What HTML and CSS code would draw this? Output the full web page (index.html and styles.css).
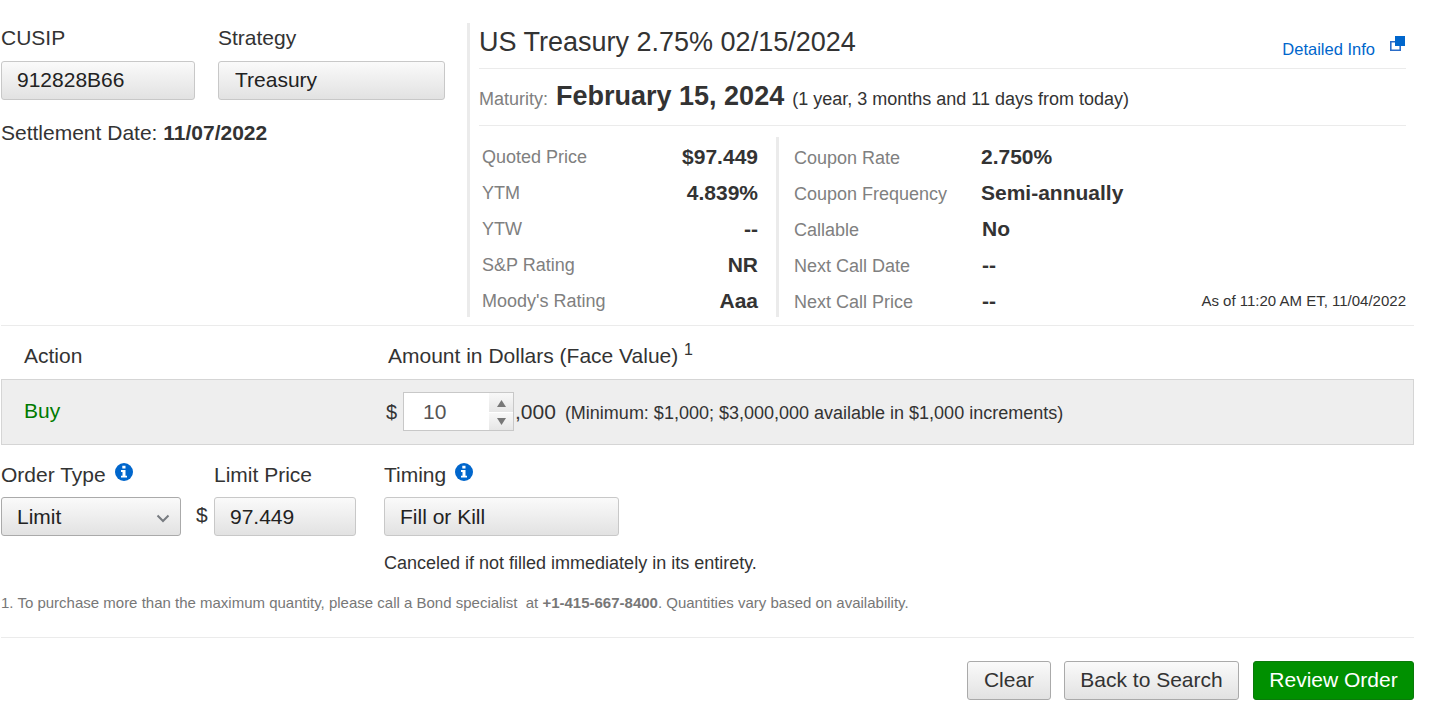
FILE: index.html
```
<!DOCTYPE html>
<html lang="en">
<head>
<meta charset="UTF-8">
<meta name="viewport" content="width=device-width, initial-scale=1.0">
<title>Bond Order</title>
<link rel="stylesheet" href="styles.css">
</head>
<body>

<form class="ticket">
  <!-- Security lookup and quote -->
  <section class="security">
    <div class="lookup">
      <div class="lookup-fields">
        <div class="field">
          <label for="cusip">CUSIP</label>
          <input type="text" id="cusip" class="box cusip" value="912828B66" readonly>
        </div>
        <div class="field">
          <label for="strategy">Strategy</label>
          <input type="text" id="strategy" class="box strategy" value="Treasury" readonly>
        </div>
      </div>
      <div class="settlement">Settlement Date: <b>11/07/2022</b></div>
    </div>

    <div class="details">
      <div class="title-row">
        <h1>US Treasury 2.75% 02/15/2024</h1>
        <a href="#" class="info-link">Detailed Info
          <svg class="popup-icon" width="16" height="16" viewBox="0 0 16 16">
            <path d="M.8 5.800h9.400v8.400H.8z" fill="#fff" stroke="#2a6cc8" stroke-width="1.600"/>
            <rect x="5" y="0" width="10" height="10" fill="#06c"/>
          </svg>
        </a>
      </div>
      <div class="maturity">
        <span class="muted">Maturity:</span>
        <b>February 15, 2024</b>
        <span>(1 year, 3 months and 11 days from today)</span>
      </div>
      <div class="stats">
        <dl class="quote">
          <dt>Quoted Price</dt><dd>$97.449</dd>
          <dt>YTM</dt><dd>4.839%</dd>
          <dt>YTW</dt><dd>--</dd>
          <dt>S&amp;P Rating</dt><dd>NR</dd>
          <dt>Moody's Rating</dt><dd>Aaa</dd>
        </dl>
        <dl class="coupon">
          <dt>Coupon Rate</dt><dd>2.750%</dd>
          <dt>Coupon Frequency</dt><dd>Semi-annually</dd>
          <dt>Callable</dt><dd class="indent">No</dd>
          <dt>Next Call Date</dt><dd class="indent">--</dd>
          <dt>Next Call Price</dt><dd class="indent">--</dd>
        </dl>
        <div class="as-of">As of 11:20 AM ET, 11/04/2022</div>
      </div>
    </div>
  </section>

  <!-- Action and amount -->
  <div class="amount-head">
    <span class="col-action">Action</span>
    <span>Amount in Dollars (Face Value) <sup>1</sup></span>
  </div>
  <div class="amount-row">
    <span class="col-action buy">Buy</span>
    <span class="dollar">$</span>
    <div class="spinner">
      <input type="text" value="10">
      <div class="spin-buttons">
        <button type="button" aria-label="Increase"><svg width="9" height="7" viewBox="0 0 9 7"><path d="M4.5 0 9 7H0z" fill="#777"/></svg></button>
        <button type="button" aria-label="Decrease"><svg width="9" height="7" viewBox="0 0 9 7"><path d="M0 0h9L4.5 7z" fill="#777"/></svg></button>
      </div>
    </div>
    <span class="thousands">,000</span>
    <span class="minimum">(Minimum: $1,000; $3,000,000 available in $1,000 increments)</span>
  </div>

  <!-- Order options -->
  <div class="options">
    <div class="field order-type">
      <label>Order Type
        <svg class="info-icon" width="18" height="18" viewBox="0 0 18 18">
          <circle cx="9" cy="9" r="9" fill="#06c"/>
          <path d="M7.300 2.800h3.200v2.800H7.300zM6 7h4.500v5.700H12v1.900H6v-1.900h1.500V8.900H6z" fill="#fff"/>
        </svg>
      </label>
      <div class="box select">
        <span>Limit</span>
        <svg class="chevron" width="14" height="9" viewBox="0 0 14 9"><path d="M1.500 1.500 7 7l5.500-5.500" fill="none" stroke="#777b80" stroke-width="2"/></svg>
      </div>
    </div>
    <span class="price-dollar">$</span>
    <div class="field limit-price">
      <label for="price">Limit Price</label>
      <input type="text" id="price" class="box price" value="97.449">
    </div>
    <div class="field">
      <label>Timing
        <svg class="info-icon" width="18" height="18" viewBox="0 0 18 18">
          <circle cx="9" cy="9" r="9" fill="#06c"/>
          <path d="M7.300 2.800h3.200v2.800H7.300zM6 7h4.500v5.700H12v1.900H6v-1.900h1.500V8.900H6z" fill="#fff"/>
        </svg>
      </label>
      <input type="text" class="box timing" value="Fill or Kill" readonly>
      <p class="timing-note">Canceled if not filled immediately in its entirety.</p>
    </div>
  </div>

  <p class="footnote">1. To purchase more than the maximum quantity, please call a Bond specialist&nbsp; at <b>+1-415-667-8400</b>. Quantities vary based on availability.</p>

  <div class="actions">
    <button type="button" class="button clear">Clear</button>
    <button type="button" class="button back">Back to Search</button>
    <button type="button" class="button review">Review Order</button>
  </div>
</form>

</body>
</html>
```
FILE: styles.css
```
* {
  box-sizing: border-box;
}
body {
  margin: 0;
  background: #fff;
  color: #333;
  font-family: Arial, "Liberation Sans", sans-serif;
  font-size: 21px;
  line-height: 24px;
}
h1, dl, dt, dd, p {
  margin: 0;
}
input, button {
  font: inherit;
  color: inherit;
}
.ticket {
  width: 1414px;
  padding: 23px 0 0 1px;
}
.field {
  display: flex;
  flex-direction: column;
}
.field label {
  height: 38px;
  padding-top: 3px;
  white-space: nowrap;
}
.box {
  height: 39px;
  padding: 0 15px;
  border: 1px solid #c8c8c8;
  border-radius: 3px;
  background: linear-gradient(#fafafa, #e2e2e2);
  color: #222;
}

/* Security */
.security {
  display: flex;
  height: 303px;
  border-bottom: 1px solid #ebebeb;
}
.lookup {
  width: 466px;
}
.lookup-fields {
  display: flex;
  gap: 23px;
}
.lookup .box {
  padding-bottom: 2px;
}
.cusip {
  width: 194px;
}
.strategy {
  width: 227px;
  padding-left: 16px;
}
.settlement {
  margin-top: 21px;
}
.details {
  flex: 1;
  height: 294px;
  margin-right: 8px;
  padding-left: 9px;
  border-left: 3px solid #ebebeb;
}
.title-row {
  display: flex;
  justify-content: space-between;
  height: 46px;
  border-bottom: 1px solid #ebebeb;
}
h1 {
  font-size: 27px;
  font-weight: normal;
  line-height: 38px;
}
.info-link {
  display: flex;
  gap: 15px;
  padding-top: 14px;
  color: #06c;
  font-size: 16.5px;
  text-decoration: none;
}
.popup-icon {
  margin-top: -1px;
}
.maturity {
  display: flex;
  align-items: baseline;
  gap: 8px;
  height: 57px;
  padding-top: 11px;
  border-bottom: 1px solid #ebebeb;
  font-size: 18px;
  line-height: 32px;
}
.maturity b {
  font-size: 27px;
}
.muted, dt {
  color: #808080;
}
.stats {
  display: flex;
  height: 180px;
  margin-top: 11px;
}
dl {
  display: grid;
  grid-auto-rows: 36px;
  line-height: 40px;
}
dt {
  font-size: 18px;
}
dd {
  font-weight: bold;
}
.quote {
  grid-template-columns: auto auto;
  width: 300px;
  padding: 0 18px 0 3px;
  border-right: 3px solid #ebebeb;
}
.quote dd {
  text-align: right;
}
.coupon {
  grid-template-columns: 187px auto;
  padding-left: 15px;
}
.coupon dt {
  padding-top: 1px;
}
.coupon .indent {
  padding-left: 1px;
}
.as-of {
  align-self: flex-end;
  margin-left: auto;
  padding-bottom: 4px;
  font-size: 15px;
}

/* Amount */
.amount-head {
  display: flex;
  height: 53px;
  padding: 18px 0 0 23px;
}
.col-action {
  width: 364px;
}
sup {
  font-size: 16px;
  line-height: 0;
}
.amount-row {
  display: flex;
  align-items: center;
  height: 66px;
  padding: 0 0 2px 22px;
  border: 1px solid #d5d5d5;
  background: #eee;
}
.amount-row .col-action {
  width: 362px;
}
.buy {
  color: #007a00;
}
.dollar {
  width: 17px;
  padding-top: 2px;
  font-size: 20px;
}
.spinner {
  display: flex;
  width: 111px;
  height: 39px;
  border: 1px solid #c8c8c8;
  background: #fff;
}
.spinner input {
  width: 85px;
  padding: 2px 0 0 19px;
  border: 0;
  background: none;
  color: #555;
}
.spin-buttons {
  display: flex;
  flex: 1;
  flex-direction: column;
  gap: 1px;
}
.spin-buttons button {
  display: flex;
  flex: 1;
  align-items: center;
  justify-content: center;
  padding: 3px 0 0;
  border: 0;
  background: linear-gradient(#f8f8f8, #e6e6e6);
}
.spin-buttons button:last-child {
  padding: 0;
}
.thousands {
  margin: 0 9px 0 1px;
  padding-top: 2px;
}
.minimum {
  padding-top: 3px;
  font-size: 18px;
}

/* Order options */
.options {
  display: flex;
  height: 138px;
  padding-top: 15px;
}
.options .field label {
  height: 37px;
}
.info-icon {
  margin: -5px 0 0 3px;
  vertical-align: 1px;
}
.select {
  display: flex;
  align-items: center;
  justify-content: space-between;
  width: 180px;
  padding-right: 10px;
  border-color: #aaa;
}
.chevron {
  margin-top: 3px;
}
.price-dollar {
  width: 33px;
  padding: 43px 0 0 15px;
}
.price {
  width: 142px;
}
.limit-price {
  margin-right: 28px;
}
.timing {
  width: 235px;
}
.timing-note {
  margin-top: 15px;
  font-size: 18px;
}
.footnote {
  height: 55px;
  padding-top: 8px;
  border-bottom: 1px solid #ebebeb;
  color: #777;
  font-size: 15px;
}

/* Buttons */
.actions {
  display: flex;
  justify-content: flex-end;
  padding-top: 23px;
}
.button {
  height: 39px;
  padding: 0 0 2px;
  border: 1px solid #aaa;
  border-radius: 3px;
  background: linear-gradient(#fafafa, #e2e2e2);
  cursor: pointer;
}
.clear {
  width: 84px;
  margin-right: 13px;
}
.back {
  width: 175px;
  margin-right: 14px;
}
.review {
  width: 161px;
  border-color: #0a7a0a;
  background: #009000;
  color: #fff;
}
```
